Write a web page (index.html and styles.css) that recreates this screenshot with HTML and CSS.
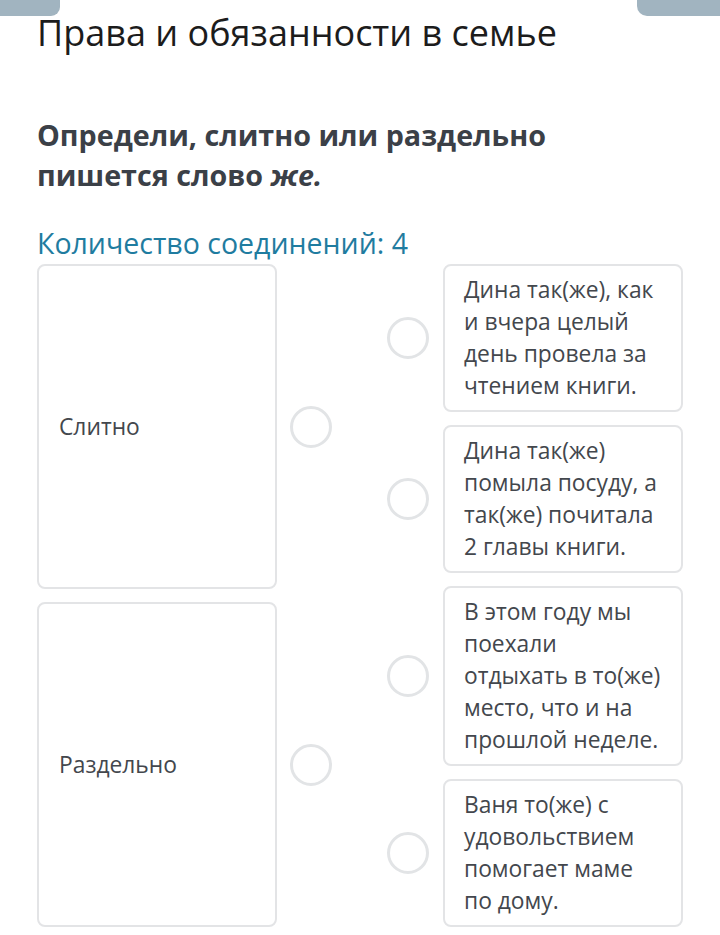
FILE: index.html
```html
<!DOCTYPE html>
<html lang="ru">

<head>
    <meta charset="utf-8" />
    <meta name="viewport" content="width=device-width, initial-scale=1.0">
    <title>Права и обязанности в семье</title>
    <link rel="stylesheet" href="styles.css">
</head>

<body>
    <div class="topbar">
        <div class="tab tab-left"></div>
        <div class="tab tab-right"></div>
    </div>
    <div class="page">
        <h1 class="title">Права и обязанности в семье</h1>
        <h2 class="question">Определи, слитно или раздельно пишется слово <em>же.</em></h2>
        <div class="count">Количество соединений: 4</div>

        <div class="matches">
            <div class="col col-left">
                <div class="item item-left">
                    <div class="card card-left">Слитно</div>
                    <span class="dot"></span>
                </div>
                <div class="item item-left">
                    <div class="card card-left">Раздельно</div>
                    <span class="dot"></span>
                </div>
            </div>
            <div class="col col-right">
                <div class="item item-right">
                    <span class="dot"></span>
                    <div class="card card-right">Дина так(же), как и вчера целый день провела за чтением книги.</div>
                </div>
                <div class="item item-right">
                    <span class="dot"></span>
                    <div class="card card-right">Дина так(же) помыла посуду, а так(же) почитала 2 главы книги.</div>
                </div>
                <div class="item item-right">
                    <span class="dot"></span>
                    <div class="card card-right">В этом году мы поехали отдыхать в то(же) место, что и на прошлой неделе.</div>
                </div>
                <div class="item item-right">
                    <span class="dot"></span>
                    <div class="card card-right">Ваня то(же) с удовольствием помогает маме по дому.</div>
                </div>
            </div>
        </div>
    </div>
</body>

</html>
```

FILE: styles.css
```css
body {
    margin: 0;
    padding: 0;
    background: #fff;
    font-family: "Open Sans", "Noto Sans", sans-serif;
    width: 720px;
}

.topbar {
    display: flex;
    justify-content: space-between;
    height: 16px;
}

.tab {
    background-color: #a1b4c0;
    height: 16px;
}

.tab-left {
    width: 60px;
    border-bottom-right-radius: 9px;
}

.tab-right {
    width: 83px;
    border-bottom-left-radius: 10px;
}

.page {
    padding: 0 37px;
}

.title {
    margin: -3px 0 0;
    font-size: 36px;
    line-height: 40px;
    font-weight: 400;
    color: #1c1c1c;
}

.question {
    margin: 62px 0 0;
    font-size: 28.7px;
    line-height: 40px;
    font-weight: 700;
    color: #3b4047;
    width: 560px;
}

.question em {
    font-style: italic;
}

.count {
    margin-top: 30px;
    font-size: 28.5px;
    line-height: 36px;
    color: #1f7ca0;
}

.matches {
    display: flex;
    gap: 55px;
    margin-top: 3px;
}

.col {
    display: flex;
    flex-direction: column;
    gap: 13px;
}

.col-left {
    width: 295px;
}

.col-right {
    width: 296px;
}

.item {
    display: flex;
    align-items: center;
    gap: 13px;
}

.item-left {
    flex: 1;
}

.item-right {
    gap: 14px;
}

.card {
    box-sizing: border-box;
    width: 240px;
    border: 2px solid #e3e4e6;
    border-radius: 8px;
    background: #fff;
    color: #43474d;
    font-size: 22.8px;
    line-height: 32px;
}

.card-left {
    align-self: stretch;
    display: flex;
    align-items: center;
    padding: 0 20px;
}

.card-right {
    padding: 8px 16px 8px 19px;
}

.dot {
    flex: none;
    box-sizing: border-box;
    width: 42px;
    height: 42px;
    border: 3px solid #e2e4e6;
    border-radius: 50%;
}
```
